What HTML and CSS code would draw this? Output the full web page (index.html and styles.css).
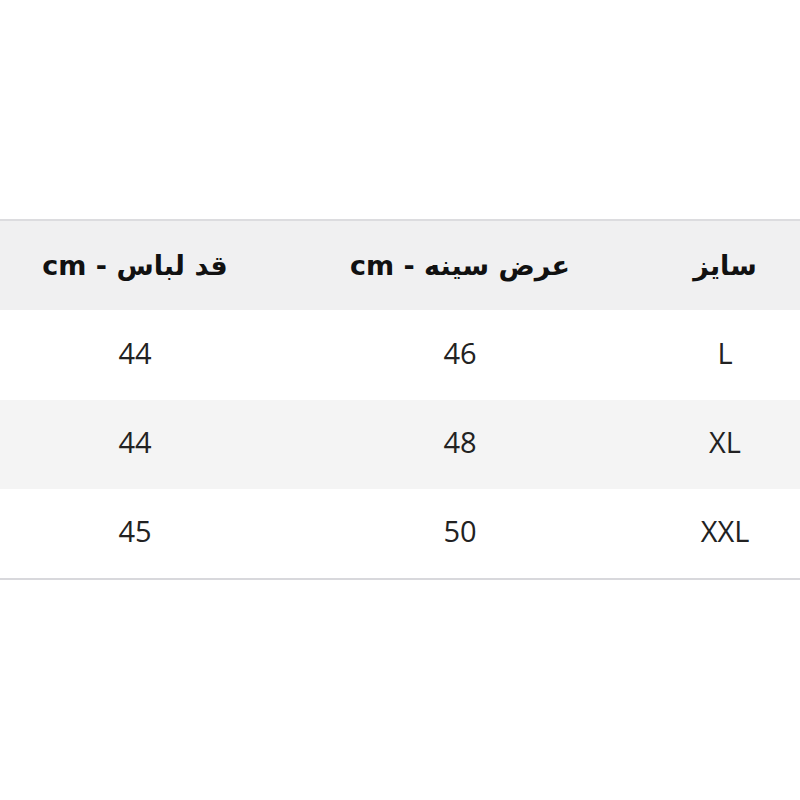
FILE: index.html
```html
<!DOCTYPE html>
<html lang="fa" dir="rtl">
<head>
<meta charset="utf-8">
<link rel="stylesheet" href="styles.css">
</head>
<body>
<div class="page">
  <table class="size-table">
    <colgroup>
      <col class="c-size">
      <col class="c-chest">
      <col class="c-length">
    </colgroup>
    <thead>
      <tr>
        <th>سایز</th>
        <th>عرض سینه - cm</th>
        <th>قد لباس - cm</th>
      </tr>
    </thead>
    <tbody>
      <tr class="first"><td>L</td><td>46</td><td>44</td></tr>
      <tr class="alt"><td>XL</td><td>48</td><td>44</td></tr>
      <tr><td>XXL</td><td>50</td><td>45</td></tr>
    </tbody>
  </table>
</div>
</body>
</html>
```

FILE: styles.css
```css
html, body {
  margin: 0;
  padding: 0;
  background: #ffffff;
}

.page {
  padding-top: 219px;
}

.size-table {
  width: 100%;
  border-collapse: collapse;
  table-layout: fixed;
  direction: rtl;
  border-top: 2px solid #dcdcdf;
  border-bottom: 2px solid #d8d8dc;
}

.c-size { width: 150px; }
.c-chest { width: 380px; }
.c-length { width: 270px; }

.size-table th {
  height: 89px;
  padding: 0;
  background: #f0f0f1;
  font-family: "DejaVu Sans", sans-serif;
  font-weight: bold;
  font-size: 27px;
  color: #111;
  text-align: center;
  vertical-align: middle;
}

.size-table td {
  height: 83px;
  padding: 0 0 6px 0;
  font-family: "Open Sans", sans-serif;
  font-size: 29px;
  color: #222;
  text-align: center;
  vertical-align: middle;
}

.size-table tr.first td {
  height: 84px;
}

.size-table tr.alt td {
  background: #f4f4f4;
}
```
